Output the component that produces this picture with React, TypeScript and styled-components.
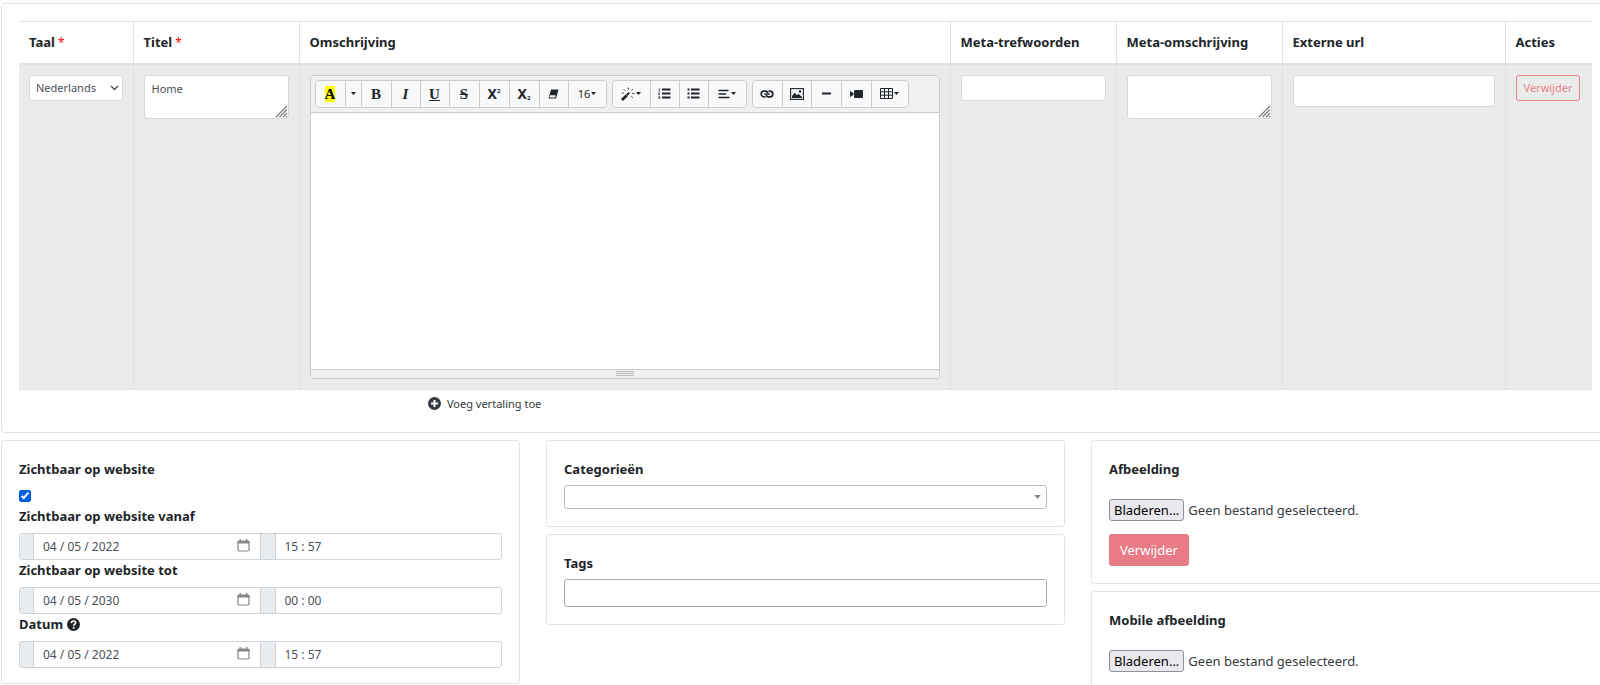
import React from "react";
import styled, { createGlobalStyle, css } from "styled-components";

const GlobalStyle = createGlobalStyle`
  *, *::before, *::after { box-sizing: border-box; }
  body {
    margin: 0;
    background: #fff;
    color: #212529;
    font-family: "Noto Sans", "Open Sans", sans-serif;
    font-size: 13px;
    line-height: 20px;
  }
  button, input, select, textarea { font-family: inherit; margin: 0; }
`;

const Page = styled.main`
  height: 100vh;
  overflow-x: hidden;
  overflow-y: auto;
  scrollbar-width: none;
  padding: 3px 0 0 1px;
`;

const Sheet = styled.div`
  display: flex;
  flex-direction: column;
  gap: 7px;
  margin-right: -10px;
`;

const Card = styled.section`
  border: 1px solid #e3e4e5;
  border-radius: 3px;
  background: #fff;
  padding: 17px;
`;

const Table = styled.table`
  width: 100%;
  table-layout: fixed;
  border-collapse: collapse;
`;

const Col = styled.col<{ $width?: number }>`
  ${(p) => p.$width && css`width: ${p.$width}px;`}
`;

const HeadCell = styled.th`
  height: 42px;
  padding: 0 10px;
  text-align: left;
  font-weight: 700;
  white-space: nowrap;
  border-top: 1px solid #dee2e6;
  border-bottom: 2px solid #dee2e6;
  & + & { border-left: 1px solid #dee2e6; }
`;

const Cell = styled.td`
  padding: 10px;
  height: 324px;
  vertical-align: top;
  background: #ebebeb;
  border-bottom: 1px solid #dee2e6;
  & + & { border-left: 1px solid #dee2e6; }
`;

const Required = styled.span`
  color: #f00;
  font-weight: 400;
  font-size: 12px;
`;

const field = css`
  display: block;
  width: 100%;
  border: 1px solid #d3d9df;
  border-radius: 3px;
  background: #fff;
  color: #495057;
  font-size: 11px;
  line-height: 18px;
  padding: 3px 6px;
  outline: 0;
`;

const SelectWrap = styled.div`
  position: relative;
  svg {
    position: absolute;
    right: 4px;
    top: 9px;
    pointer-events: none;
  }
`;

const LanguageSelect = styled.select`
  ${field}
  height: 26px;
  appearance: none;
`;

const TextField = styled.input<{ $tall?: boolean }>`
  ${field}
  height: ${(p) => (p.$tall ? 32 : 26)}px;
`;

const AreaWrap = styled.div`
  position: relative;
  svg {
    position: absolute;
    right: 1px;
    bottom: 1px;
    pointer-events: none;
  }
`;

const Area = styled.textarea`
  ${field}
  height: 44px;
  padding: 4px 7px;
  resize: none;
`;

const OutlineDanger = styled.button`
  height: 26px;
  padding: 0 7px;
  border: 1px solid #e8828c;
  border-radius: 3px;
  background: transparent;
  color: #e8828c;
  font-size: 11px;
  line-height: 18px;
`;

const Danger = styled.button`
  height: 32px;
  padding: 0 11px;
  border: 0;
  border-radius: 3px;
  background: #e97b86;
  color: #fff;
  font-size: 13px;
`;

const Editor = styled.div`
  border: 1px solid #ccc;
  border-radius: 3px;
  background: #fff;
`;

const Toolbar = styled.div`
  display: flex;
  flex-wrap: wrap;
  gap: 5px;
  padding: 4px;
  background: #f0f0f0;
  border-bottom: 1px solid #ccc;
`;

const ToolGroup = styled.div`
  display: flex;
  border: 1px solid #ccc;
  border-radius: 4px;
  overflow: hidden;
`;

const Tool = styled.button<{ $width?: number }>`
  display: flex;
  align-items: center;
  justify-content: center;
  gap: 1px;
  width: ${(p) => p.$width ?? 30}px;
  height: 26px;
  padding: 0;
  border: 0;
  background: #f8f9fa;
  color: #212529;
  font-size: 11px;
  line-height: 16px;
  & + & { border-left: 1px solid #ccc; }
`;

const Letter = styled.span<{ $kind?: "italic" | "underline" | "strike" }>`
  font-family: "Liberation Serif", serif;
  font-weight: 700;
  font-size: 15px;
  font-style: ${(p) => (p.$kind === "italic" ? "italic" : "normal")};
  text-decoration: ${(p) =>
    p.$kind === "underline" ? "underline" : p.$kind === "strike" ? "line-through" : "none"};
`;

const Highlight = styled(Letter)`
  background: #ff0;
  color: #000;
`;

const Script = styled.span`
  font-weight: 700;
  font-size: 14px;
  sup, sub { font-size: 6px; line-height: 0; }
  sub { vertical-align: -1px; }
`;

const EditorBody = styled.div`
  height: 256px;
  outline: 0;
`;

const StatusBar = styled.div`
  display: flex;
  flex-direction: column;
  align-items: center;
  gap: 1px;
  height: 9px;
  padding-top: 1px;
  background: #f0f0f0;
  border-top: 1px solid #ccc;
`;

const GripLine = styled.span`
  width: 18px;
  height: 1px;
  background: #bbb;
`;

const AddRow = styled.div`
  padding: 4px 0 0 26%;
`;

const AddLink = styled.a`
  display: inline-flex;
  align-items: center;
  gap: 6px;
  color: #343a40;
  font-size: 11px;
  text-decoration: none;
`;

const Columns = styled.div`
  display: grid;
  grid-template-columns: repeat(3, 1fr);
  align-items: start;
  gap: 26px;
`;

const Stack = styled.div`
  display: flex;
  flex-direction: column;
  gap: 7px;
`;

const SmallCard = styled(Card)`
  padding: 18px 17px 17px;
`;

const Label = styled.label`
  display: flex;
  align-items: center;
  gap: 4px;
  font-weight: 700;
  font-size: 13px;
  line-height: 20px;
`;

const VisibilityForm = styled.div`
  display: flex;
  flex-direction: column;
`;

const Check = styled.input`
  appearance: none;
  display: grid;
  place-items: center;
  width: 12px;
  height: 12px;
  margin: 11px 0 4px;
  border: 1px solid #0060df;
  border-radius: 2px;
  background: #fff;
  &:checked { background: #0060df; }
  &:checked::after {
    content: "";
    width: 4px;
    height: 8px;
    margin-bottom: 2px;
    border: solid #fff;
    border-width: 0 2px 2px 0;
    transform: rotate(42deg);
  }
`;

const MomentField = styled.div`
  display: flex;
  flex-direction: column;
  gap: 7px;
  height: 54px;
  &:last-child { height: 52px; }
`;

const InputGroup = styled.div`
  display: flex;
  flex: none;
  height: 27px;
  border: 1px solid #ced4da;
  border-radius: 3px;
  overflow: hidden;
`;

const Addon = styled.span`
  width: 14px;
  flex: none;
  background: #e9ecef;
  border-right: 1px solid #ced4da;
  div + & {
    width: 16px;
    border-left: 1px solid #ced4da;
  }
`;

const MomentBox = styled.div`
  display: flex;
  align-items: center;
  flex: 1;
  min-width: 0;
  padding: 0 10px 0 9px;
`;

const MomentInput = styled.input`
  flex: 1;
  min-width: 0;
  border: 0;
  padding: 0;
  outline: 0;
  background: transparent;
  color: #495057;
  font-size: 12px;
  line-height: 18px;
`;

const IconButton = styled.button`
  display: flex;
  border: 0;
  padding: 0 0 2px;
  background: none;
  color: #858585;
`;

const ChoiceWrap = styled.div`
  position: relative;
  margin-top: 6px;
  svg {
    position: absolute;
    right: 6px;
    top: 10px;
    pointer-events: none;
  }
`;

const Choice = styled.select`
  display: block;
  width: 100%;
  height: 24px;
  appearance: none;
  border: 1px solid #bbb;
  border-radius: 3px;
  background: #fff;
`;

const TagInput = styled.input`
  display: block;
  width: 100%;
  height: 28px;
  margin-top: 6px;
  border: 1px solid #aaa;
  border-radius: 3px;
  background: #fff;
  padding: 0 6px;
`;

const ImageFields = styled.div`
  display: flex;
  flex-direction: column;
  align-items: flex-start;
`;

const FileRow = styled.label`
  display: flex;
  align-items: center;
  gap: 4px;
  margin: 20px 0 13px;
  color: #343a40;
`;

const FileInput = styled.input`
  position: absolute;
  width: 1px;
  height: 1px;
  opacity: 0;
`;

const FileButton = styled.span`
  height: 22px;
  padding: 0 4px;
  border: 1px solid #8f8f9d;
  border-radius: 3px;
  background: #e9e9ed;
  color: #000;
`;

const Chevron = () => (
  <svg width="9" height="8" viewBox="0 0 9 8" fill="none" stroke="#495057" strokeWidth="1.4">
    <path d="M1 2l3.5 3.5L8 2" />
  </svg>
);

const ResizeGrip = () => (
  <svg width="13" height="13" viewBox="0 0 13 13" stroke="#777" strokeWidth="1.1">
    <path d="M1 12L12 1M4.5 12L12 4.5M8 12l4-4M11 12l1-1" />
  </svg>
);

const Caret = ({ width = 5, color = "#212529" }: { width?: number; color?: string }) => (
  <svg width={width} height={width === 5 ? 3 : 4} viewBox="0 0 5 3" fill={color}>
    <path d="M0 0h5L2.5 3z" />
  </svg>
);

const CalendarIcon = () => (
  <svg width="13" height="13" viewBox="0 0 13 13" fill="none" stroke="currentColor">
    <rect x="1" y="2" width="11" height="10" rx="1.2" strokeWidth="1.2" />
    <path d="M.6 3.2h11.8" strokeWidth="2.4" />
    <path d="M3.2 0v2M9.8 0v2" strokeWidth="1.4" />
  </svg>
);

const PlusCircle = () => (
  <svg width="13" height="13" viewBox="0 0 13 13">
    <circle cx="6.5" cy="6.5" r="6.5" fill="#343a40" />
    <path d="M6.5 3v7M3 6.5h7" stroke="#fff" strokeWidth="2" />
  </svg>
);

const HelpCircle = () => (
  <svg width="13" height="13" viewBox="0 0 13 13" fill="none" role="img" aria-label="Help">
    <circle cx="6.5" cy="6.5" r="6.5" fill="#212529" />
    <path d="M4.4 5.1C4.5 3.7 5.4 3 6.6 3s2.1.7 2.1 1.8c0 1.5-2 1.4-2 2.9" stroke="#fff" strokeWidth="1.6" />
    <circle cx="6.6" cy="9.7" r="1" fill="#fff" />
  </svg>
);

const EraserIcon = () => (
  <svg width="11" height="10" viewBox="0 0 11 10">
    <path d="M3 .5h7.5L8 9.5H.5z" fill="#212529" />
    <path d="M2 6.2h5.8l-.7 2.3H1.5z" fill="#f8f9fa" />
  </svg>
);

const MagicIcon = () => (
  <svg width="14" height="14" viewBox="0 0 14 14" fill="none" stroke="#212529">
    <path d="M1 13l4.6-4.6" strokeWidth="2.8" />
    <path d="M5.6 8.4l2.7-2.7" strokeWidth="2" />
    <path d="M7.3.5v2.2M2.6 2.2l1.4 1.4M11.8 2.2l-1.4 1.4M11.3 6.5h2.4M10.4 9.4l1.4 1.4M1 6h1.8" strokeWidth="0.9" />
  </svg>
);

const ListIcon = ({ ordered }: { ordered?: boolean }) => (
  <svg width="13" height="11" viewBox="0 0 13 11" stroke="#212529" fill="none">
    <path d="M4 1.5h8.5M4 5.5h8.5M4 9.5h8.5" strokeWidth="2" />
    {ordered ? (
      <path d="M.5 1h1v2.5M.3 4.7h1.5L.5 6.5h1.5M.3 8.2h1.4v2.3H.3M.7 9.3h1" strokeWidth="0.7" />
    ) : (
      <path d="M.5 1.5h2M.5 5.5h2M.5 9.5h2" strokeWidth="2" />
    )}
  </svg>
);

const AlignIcon = () => (
  <svg width="12" height="10" viewBox="0 0 12 10" stroke="#212529" strokeWidth="1.6">
    <path d="M.5 1.5h10M.5 5h7.5M.5 8.5h11" />
  </svg>
);

const LinkIcon = () => (
  <svg width="14" height="8" viewBox="0 0 14 8" fill="none" stroke="#212529" strokeWidth="1.7">
    <path d="M6 1.2H4a2.8 2.8 0 000 5.6h1.4M8 6.8h2a2.8 2.8 0 000-5.6H8.6M4.3 4h5.4" />
    <path d="M6 1.2c1 .2 1.6.9 1.9 1.7M8 6.8c-1-.2-1.6-.9-1.9-1.7" />
  </svg>
);

const PictureIcon = () => (
  <svg width="14" height="12" viewBox="0 0 14 12">
    <rect x=".6" y=".6" width="12.8" height="10.8" fill="none" stroke="#212529" strokeWidth="1.1" />
    <path d="M2 10V8l2.7-3.3L7 7.2l1.4-1.4L12 9v1z" fill="#212529" />
    <circle cx="10" cy="3.5" r="1.2" fill="#212529" />
  </svg>
);

const RuleIcon = () => (
  <svg width="9" height="3" viewBox="0 0 9 3">
    <path d="M0 .5h9v2H0z" fill="#212529" />
  </svg>
);

const VideoIcon = () => (
  <svg width="13" height="8" viewBox="0 0 13 8" fill="#212529">
    <rect x="4" y="0" width="9" height="8" rx="1" />
    <path d="M0 1l3.4 2v2L0 7z" />
  </svg>
);

const TableIcon = () => (
  <svg width="13" height="11" viewBox="0 0 13 11" fill="none" stroke="#212529">
    <path d="M.5.5h12v10H.5zM.5 3.8h12M.5 7.2h12M4.5.5v10M8.5.5v10" />
  </svg>
);

const columns = [
  { title: "Taal", width: 114, required: true },
  { title: "Titel", width: 166, required: true },
  { title: "Omschrijving" },
  { title: "Meta-trefwoorden", width: 166 },
  { title: "Meta-omschrijving", width: 166 },
  { title: "Externe url", width: 223 },
  { title: "Acties", width: 87 },
];

function DescriptionEditor() {
  return (
    <Editor>
      <Toolbar role="toolbar" aria-label="Opmaak">
        <ToolGroup>
          <Tool $width={29} aria-label="Kleur"><Highlight>A</Highlight></Tool>
          <Tool $width={16} aria-label="Meer kleuren"><Caret /></Tool>
          <Tool>
            <Letter>B</Letter>
          </Tool>
          <Tool $width={29}><Letter $kind="italic">I</Letter></Tool>
          <Tool $width={29}><Letter $kind="underline">U</Letter></Tool>
          <Tool><Letter $kind="strike">S</Letter></Tool>
          <Tool><Script>X<sup>2</sup></Script></Tool>
          <Tool><Script>X<sub>2</sub></Script></Tool>
          <Tool $width={29} aria-label="Opmaak wissen"><EraserIcon /></Tool>
          <Tool $width={38}>16<Caret /></Tool>
        </ToolGroup>
        <ToolGroup>
          <Tool $width={37} aria-label="Stijl"><MagicIcon /><Caret /></Tool>
          <Tool $width={29} aria-label="Genummerde lijst"><ListIcon ordered /></Tool>
          <Tool $width={29} aria-label="Lijst"><ListIcon /></Tool>
          <Tool $width={38} aria-label="Alinea"><AlignIcon /><Caret /></Tool>
        </ToolGroup>
        <ToolGroup>
          <Tool $width={29} aria-label="Link"><LinkIcon /></Tool>
          <Tool $width={29} aria-label="Afbeelding"><PictureIcon /></Tool>
          <Tool aria-label="Lijn"><RuleIcon /></Tool>
          <Tool aria-label="Video"><VideoIcon /></Tool>
          <Tool $width={37} aria-label="Tabel"><TableIcon /><Caret /></Tool>
        </ToolGroup>
      </Toolbar>
      <EditorBody contentEditable suppressContentEditableWarning role="textbox" aria-label="Omschrijving" />
      <StatusBar><GripLine /><GripLine /><GripLine /></StatusBar>
    </Editor>
  );
}

function Moment({ id, label, date, time, help }: {
  id: string; label: string; date: string; time: string; help?: boolean;
}) {
  return (
    <MomentField>
      <Label htmlFor={id}>{label}{help && <HelpCircle />}</Label>
      <InputGroup>
        <Addon />
        <MomentBox>
          <MomentInput id={id} defaultValue={date} />
          <IconButton aria-label="Kies datum"><CalendarIcon /></IconButton>
        </MomentBox>
        <Addon />
        <MomentBox>
          <MomentInput aria-label={`${label} tijd`} defaultValue={time} />
        </MomentBox>
      </InputGroup>
    </MomentField>
  );
}

function ImageCard({ id, title, removable }: { id: string; title: string; removable?: boolean }) {
  return (
    <SmallCard>
      <ImageFields>
        <Label htmlFor={id}>{title}</Label>
        <FileRow>
          <FileInput id={id} type="file" />
          <FileButton>Bladeren...</FileButton>
          Geen bestand geselecteerd.
        </FileRow>
        {removable && <Danger>Verwijder</Danger>}
      </ImageFields>
    </SmallCard>
  );
}

export default function App() {
  return (
    <>
      <GlobalStyle />
      <Page>
        <Sheet>
          <Card>
            <Table>
              <colgroup>
                {columns.map((c) => <Col key={c.title} $width={c.width} />)}
              </colgroup>
              <thead>
                <tr>
                  {columns.map((c) => (
                    <HeadCell key={c.title} scope="col">
                      {c.title}{c.required && <Required> *</Required>}
                    </HeadCell>
                  ))}
                </tr>
              </thead>
              <tbody>
                <tr>
                  <Cell>
                    <SelectWrap>
                      <LanguageSelect aria-label="Taal"><option>Nederlands</option></LanguageSelect>
                      <Chevron />
                    </SelectWrap>
                  </Cell>
                  <Cell>
                    <AreaWrap><Area aria-label="Titel" defaultValue="Home" /><ResizeGrip /></AreaWrap>
                  </Cell>
                  <Cell><DescriptionEditor /></Cell>
                  <Cell><TextField aria-label="Meta-trefwoorden" /></Cell>
                  <Cell>
                    <AreaWrap><Area aria-label="Meta-omschrijving" /><ResizeGrip /></AreaWrap>
                  </Cell>
                  <Cell><TextField $tall aria-label="Externe url" /></Cell>
                  <Cell><OutlineDanger>Verwijder</OutlineDanger></Cell>
                </tr>
              </tbody>
            </Table>
            <AddRow>
              <AddLink href="#"><PlusCircle />Voeg vertaling toe</AddLink>
            </AddRow>
          </Card>
          <Columns>
            <SmallCard>
              <VisibilityForm>
                <Label htmlFor="visible">Zichtbaar op website</Label>
                <Check id="visible" type="checkbox" defaultChecked />
                <Moment id="from" label="Zichtbaar op website vanaf" date="04 / 05 / 2022" time="15 : 57" />
                <Moment id="until" label="Zichtbaar op website tot" date="04 / 05 / 2030" time="00 : 00" />
                <Moment id="date" label="Datum" date="04 / 05 / 2022" time="15 : 57" help />
              </VisibilityForm>
            </SmallCard>
            <Stack>
              <SmallCard>
                <Label htmlFor="categories">Categorieën</Label>
                <ChoiceWrap>
                  <Choice id="categories" />
                  <Caret width={7} color="#888" />
                </ChoiceWrap>
              </SmallCard>
              <SmallCard>
                <Label htmlFor="tags">Tags</Label>
                <TagInput id="tags" />
              </SmallCard>
            </Stack>
            <Stack>
              <ImageCard id="image" title="Afbeelding" removable />
              <ImageCard id="mobile-image" title="Mobile afbeelding" />
            </Stack>
          </Columns>
        </Sheet>
      </Page>
    </>
  );
}
